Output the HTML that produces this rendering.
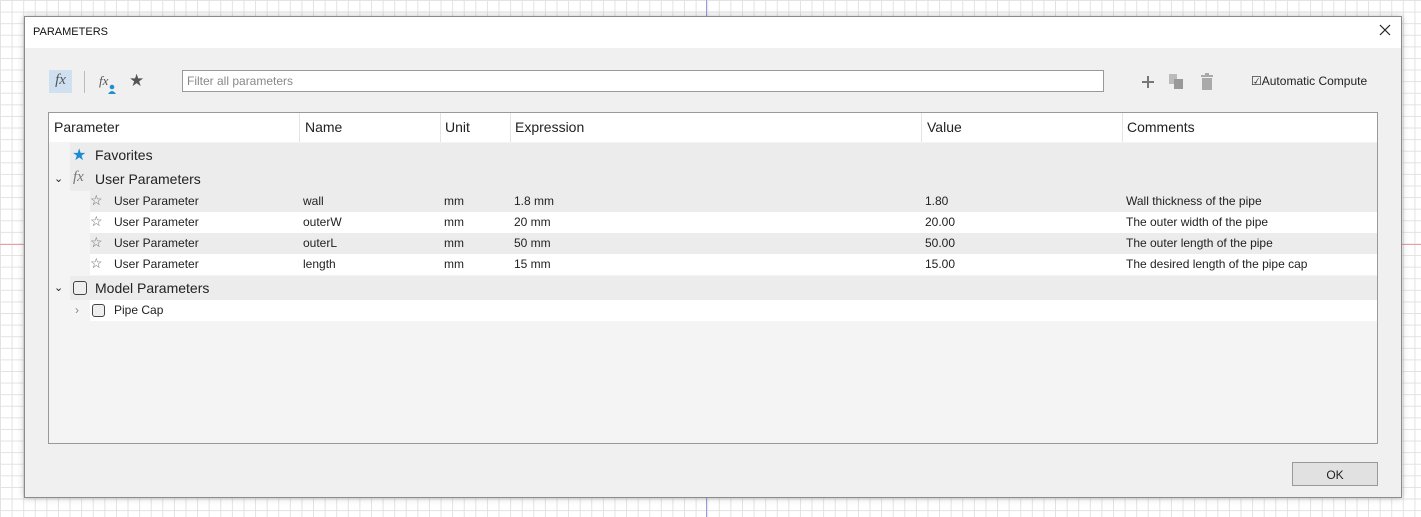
<!DOCTYPE html>
<html><head><meta charset="utf-8"><style>
*{margin:0;padding:0;box-sizing:border-box}
body{width:1421px;height:517px;overflow:hidden;position:relative;font-family:"Liberation Sans",sans-serif;color:#222;
background-color:#fff;
background-image:linear-gradient(#e2e2e2 1px,transparent 1px),linear-gradient(90deg,#e2e2e2 1px,transparent 1px);
background-size:11.6px 11.6px;}
.vl{position:absolute;left:706px;top:0;width:1px;height:517px;background:#9a9ae0}
.hl{position:absolute;left:0;top:244px;width:1421px;height:1px;background:#e8a0a0}
.dlg{position:absolute;left:24px;top:16px;width:1378px;height:482px;background:#f0f0f0;border:1px solid #8a8a8a;box-shadow:0 0 6px rgba(0,0,0,.25)}
.title{position:absolute;left:0;top:0;width:100%;height:31px;background:#fff;font-size:11px;padding:9px 0 0 8px;color:#111}
.close{position:absolute;right:10px;top:7px}
.abs{position:absolute}
.filter{position:absolute;left:157px;top:53px;width:922px;height:22px;border:1px solid #999;background:#fff;font-size:12px;color:#888;padding:3px 4px}
.tbl{position:absolute;left:23px;top:95px;width:1330px;height:332px;background:#f4f4f4;border:1px solid #999;overflow:hidden}
.hdr{position:absolute;left:0;top:0;width:100%;height:29px;background:#fff;font-size:14px}
.hdr span{position:absolute;top:6px}
.sep{position:absolute;top:0;width:1px;height:29px;background:#e4e4e4}
.row{position:absolute;height:21px;font-size:12px}
.row span{position:absolute;top:3px}
.grp{position:absolute;height:24px;font-size:14px;background:#ececec}
.grp span{position:absolute;top:4px}
.ok{position:absolute;left:1267px;top:445px;width:86px;height:24px;background:#e1e1e1;border:1px solid #999;font-size:12px;text-align:center;padding-top:5px}
</style></head><body>
<div class="vl"></div><div class="hl"></div>
<div class="dlg">
<div class="title">PARAMETERS<svg class="close" width="12" height="12"><path d="M1 1L11 11M11 1L1 11" stroke="#222" stroke-width="1.2"/></svg></div>
<div class="abs" style="left:24px;top:53px;width:23px;height:23px;background:#cfe0f0;font-family:'Liberation Serif',serif;font-style:italic;font-size:15px;color:#555;text-align:center;padding-top:2px">fx</div>
<div class="abs" style="left:59px;top:54px;width:1px;height:22px;background:#bbb"></div>
<div class="abs" style="left:74px;top:56px;font-family:'Liberation Serif',serif;font-style:italic;font-size:13px;color:#555">fx</div>
<div class="abs" style="left:83px;top:64px;width:7px;height:9px;"><svg width="8" height="10"><circle cx="4" cy="3" r="2.3" fill="#1e90d0"/><path d="M0 10 Q4 4 8 10Z" fill="#1e90d0"/></svg></div>
<div class="abs" style="left:104px;top:54px;font-size:17px;color:#555">★</div>
<div class="filter">Filter all parameters</div>
<svg class="abs" style="left:1116px;top:58px" width="14" height="14"><path d="M7 1V13M1 7H13" stroke="#777" stroke-width="2"/></svg>
<svg class="abs" style="left:1144px;top:57px" width="16" height="16"><rect x="0" y="0" width="8" height="10" fill="#bbb"/><rect x="5" y="5" width="9" height="10" fill="#999"/></svg>
<svg class="abs" style="left:1176px;top:56px" width="12" height="17"><rect x="0" y="2" width="12" height="2" fill="#aaa"/><rect x="4" y="0" width="4" height="2" fill="#aaa"/><rect x="1" y="5" width="10" height="12" fill="#aaa"/></svg>
<div class="abs" style="left:1226px;top:57px;font-size:12px;color:#222">☑Automatic Compute</div>
<div class="tbl">
<div class="hdr"><span style="left:5px">Parameter</span><span style="left:256px">Name</span><span style="left:396px">Unit</span><span style="left:466px">Expression</span><span style="left:878px">Value</span><span style="left:1078px">Comments</span>
<div class="sep" style="left:250px"></div><div class="sep" style="left:391px"></div><div class="sep" style="left:461px"></div><div class="sep" style="left:872px"></div><div class="sep" style="left:1073px"></div></div>
<div class="grp" style="left:21px;top:30px;width:1307px"><span style="left:2px;color:#1a8ad4;font-size:16px;top:2px">★</span><span style="left:25px">Favorites</span></div>
<div class="grp" style="left:21px;top:54px;width:1307px"><span style="left:-16px;font-size:11px;top:5px">⌄</span><span style="left:3px;font-family:'Liberation Serif',serif;font-style:italic;color:#777;font-size:15px;top:2px">fx</span><span style="left:25px">User Parameters</span></div>
<div class="row" style="left:41px;top:78px;width:1287px;background:#ececec"><span style="left:0;font-size:14px;top:1px;color:#666">☆</span><span style="left:24px">User Parameter</span><span style="left:213px">wall</span><span style="left:354px">mm</span><span style="left:424px">1.8 mm</span><span style="left:835px">1.80</span><span style="left:1036px">Wall thickness of the pipe</span></div>
<div class="row" style="left:41px;top:99px;width:1287px;background:#fff"><span style="left:0;font-size:14px;top:1px;color:#666">☆</span><span style="left:24px">User Parameter</span><span style="left:213px">outerW</span><span style="left:354px">mm</span><span style="left:424px">20 mm</span><span style="left:835px">20.00</span><span style="left:1036px">The outer width of the pipe</span></div>
<div class="row" style="left:41px;top:120px;width:1287px;background:#ececec"><span style="left:0;font-size:14px;top:1px;color:#666">☆</span><span style="left:24px">User Parameter</span><span style="left:213px">outerL</span><span style="left:354px">mm</span><span style="left:424px">50 mm</span><span style="left:835px">50.00</span><span style="left:1036px">The outer length of the pipe</span></div>
<div class="row" style="left:41px;top:141px;width:1287px;background:#fff"><span style="left:0;font-size:14px;top:1px;color:#666">☆</span><span style="left:24px">User Parameter</span><span style="left:213px">length</span><span style="left:354px">mm</span><span style="left:424px">15 mm</span><span style="left:835px">15.00</span><span style="left:1036px">The desired length of the pipe cap</span></div>
<div class="grp" style="left:21px;top:163px;width:1307px"><span style="left:-16px;font-size:11px;top:5px">⌄</span><span style="left:3px;top:5px;width:14px;height:14px;border:1.5px solid #444;border-radius:3px;background:#eee"></span><span style="left:25px">Model Parameters</span></div>
<div class="row" style="left:41px;top:187px;width:1287px;background:#fff"><span style="left:-15px;color:#888">›</span><span style="left:2px;top:4px;width:13px;height:13px;border:1.5px solid #444;border-radius:3px;background:#eee"></span><span style="left:24px">Pipe Cap</span></div>
</div>
<div class="ok">OK</div>
</div>
</body></html>
